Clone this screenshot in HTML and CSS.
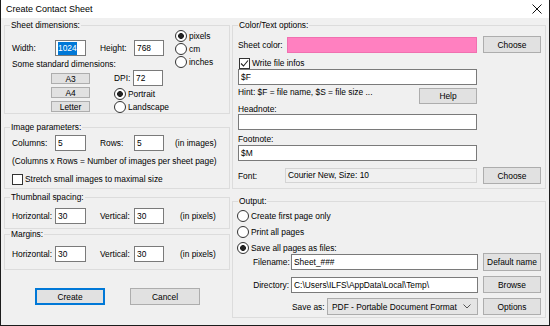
FILE: index.html
```html
<!DOCTYPE html>
<html lang="en">
<head>
    <meta charset="UTF-8">
    <title>Create Contact Sheet</title>
    <link rel="stylesheet" href="styles.css">
</head>
<body>
    <div class="window">
        <div class="titlebar">
            <span class="title">Create Contact Sheet</span>
            <svg class="close" width="10" height="10" viewBox="0 0 10 10"><path d="M0.5 0.5L9.5 9.5M9.5 0.5L0.5 9.5" stroke="#111" stroke-width="1"/></svg>
        </div>
        <div class="dialog">
            <div class="col-left">
                <fieldset class="group sheet">
                    <legend>Sheet dimensions:</legend>
                    <div class="inner">
                        <div class="sheet-top">
                            <div class="sheet-size">
                                <div class="row">
                                    <span class="lbl w43">Width:</span>
                                    <span class="edit w31"><span class="sel">1024</span></span>
                                    <span class="lbl w34 ml14">Height:</span>
                                    <span class="edit w30">768</span>
                                </div>
                                <div class="caption">Some standard dimensions:</div>
                            </div>
                            <div class="units">
                                <div class="radio on"><i></i>pixels</div>
                                <div class="radio"><i></i>cm</div>
                                <div class="radio"><i></i>inches</div>
                            </div>
                        </div>
                        <div class="sheet-bottom">
                            <div class="std-buttons">
                                <span class="btn std">A3</span>
                                <span class="btn std">A4</span>
                                <span class="btn std">Letter</span>
                            </div>
                            <div class="dpi">
                                <div class="row">
                                    <span class="lbl w19">DPI:</span>
                                    <span class="edit w30">72</span>
                                </div>
                                <div class="radio on"><i></i>Portrait</div>
                                <div class="radio"><i></i>Landscape</div>
                            </div>
                        </div>
                    </div>
                </fieldset>

                <fieldset class="group params">
                    <legend>Image parameters:</legend>
                    <div class="inner">
                        <div class="row">
                            <span class="lbl w43">Columns:</span>
                            <span class="edit w31">5</span>
                            <span class="lbl w34 ml14">Rows:</span>
                            <span class="edit w30">5</span>
                            <span class="unit ml11">(in images)</span>
                        </div>
                        <div class="note">(Columns x Rows = Number of images per sheet page)</div>
                        <div class="check"><i></i>Stretch small images to maximal size</div>
                    </div>
                </fieldset>

                <fieldset class="group spacing">
                    <legend>Thumbnail spacing:</legend>
                    <div class="inner">
                        <div class="row">
                            <span class="lbl w43">Horizontal:</span>
                            <span class="edit w31">30</span>
                            <span class="lbl w34 ml14">Vertical:</span>
                            <span class="edit w30">30</span>
                            <span class="unit ml16">(in pixels)</span>
                        </div>
                    </div>
                </fieldset>

                <fieldset class="group margins">
                    <legend>Margins:</legend>
                    <div class="inner">
                        <div class="row">
                            <span class="lbl w43">Horizontal:</span>
                            <span class="edit w31">30</span>
                            <span class="lbl w34 ml14">Vertical:</span>
                            <span class="edit w30">30</span>
                            <span class="unit ml16">(in pixels)</span>
                        </div>
                    </div>
                </fieldset>

                <div class="actions">
                    <span class="btn big default">Create</span>
                    <span class="btn big">Cancel</span>
                </div>
            </div>

            <div class="col-right">
                <fieldset class="group text-opts">
                    <legend>Color/Text options:</legend>
                    <div class="inner">
                        <div class="row r-color">
                            <span class="lbl w49">Sheet color:</span>
                            <span class="swatch"></span>
                            <span class="btn side">Choose</span>
                        </div>
                        <div class="check on"><i><svg width="9" height="9" viewBox="0 0 9 9"><path d="M1 4.5L3.5 7L8 1.5" fill="none" stroke="#222" stroke-width="1.1"/></svg></i>Write file infos</div>
                        <span class="edit wide">$F</span>
                        <div class="hint-row">
                            <span class="hint">Hint: $F = file name, $S = file size ...</span>
                            <span class="btn help">Help</span>
                        </div>
                        <div class="caption">Headnote:</div>
                        <span class="edit wide"></span>
                        <div class="caption foot">Footnote:</div>
                        <span class="edit wide foot-edit">$M</span>
                        <div class="row r-font">
                            <span class="lbl w47">Font:</span>
                            <span class="static">Courier New, Size: 10</span>
                            <span class="btn side">Choose</span>
                        </div>
                    </div>
                </fieldset>

                <fieldset class="group output">
                    <legend>Output:</legend>
                    <div class="inner">
                        <div class="out-radios">
                            <div class="radio"><i></i>Create first page only</div>
                            <div class="radio"><i></i>Print all pages</div>
                            <div class="radio on"><i></i>Save all pages as files:</div>
                        </div>
                        <div class="row r-file">
                            <span class="lbl rlbl">Filename:</span>
                            <span class="edit path">Sheet_###</span>
                            <span class="btn side tall">Default name</span>
                        </div>
                        <div class="row r-dir">
                            <span class="lbl rlbl">Directory:</span>
                            <span class="edit path">C:\Users\ILFS\AppData\Local\Temp\</span>
                            <span class="btn side">Browse</span>
                        </div>
                        <div class="row r-save">
                            <span class="lbl w35">Save as:</span>
                            <span class="combo">PDF - Portable Document Format<svg width="8" height="5" viewBox="0 0 8 5"><path d="M0.5 0.5L4 4L7.5 0.5" fill="none" stroke="#555" stroke-width="1"/></svg></span>
                            <span class="btn side">Options</span>
                        </div>
                    </div>
                </fieldset>
            </div>
        </div>
    </div>
</body>
</html>
```

FILE: styles.css
```css
* {
    box-sizing: border-box;
}
body {
    margin: 0;
    font-family: "Liberation Sans", Arial, sans-serif;
    font-size: 8.4px;
    color: #000;
    background: #f0f0f0;
}
.window {
    width: 550px;
    height: 326px;
    border: 1px solid #1c1c1c;
    border-top: 0;
    background: #f0f0f0;
}
.titlebar {
    height: 18px;
    background: #fff;
    display: flex;
    align-items: center;
    justify-content: space-between;
    padding: 0 7px 0 5px;
}
.title {
    font-size: 9px;
}
.dialog {
    display: flex;
    gap: 2px;
    padding: 2px 2px 0 3px;
}
.col-left {
    width: 226px;
}
.col-right {
    width: 314px;
}

/* group boxes */
.group {
    margin: 0;
    padding: 0;
    min-width: 0;
    border: 1px solid #dcdcdc;
}
.group legend {
    margin-left: 5px;
    padding: 0 1px;
    line-height: 10px;
    height: 10px;
}
.group .inner {
    padding-left: 7px;
}

/* controls */
.row {
    display: flex;
    align-items: center;
    height: 16px;
}
.lbl {
    flex: none;
    white-space: nowrap;
}
.w19 { width: 19px; }
.w34 { width: 34px; }
.w35 { width: 35px; }
.w43 { width: 43px; }
.w47 { width: 47px; }
.w49 { width: 49px; }
.ml11 { margin-left: 11px; }
.ml14 { margin-left: 14px; }
.ml16 { margin-left: 16px; }

.edit {
    display: block;
    flex: none;
    height: 16px;
    line-height: 14px;
    padding-left: 2px;
    background: #fff;
    border: 1px solid #7a7a7a;
    white-space: nowrap;
    overflow: hidden;
}
.edit.w30 { width: 30px; }
.edit.w31 { width: 31px; }
.sel {
    background: #0078d7;
    color: #fff;
    padding: 1px 0 2px;
}
.btn {
    display: flex;
    align-items: center;
    justify-content: center;
    flex: none;
    background: #e1e1e1;
    border: 1px solid #adadad;
    white-space: nowrap;
}
.btn.default {
    border-color: #0078d7;
    box-shadow: inset 0 0 0 1px #0078d7;
}
.radio {
    display: flex;
    align-items: center;
    height: 13px;
    white-space: nowrap;
}
.radio i,
.check i {
    flex: none;
    width: 12px;
    height: 12px;
    margin-right: 2px;
    background: #fff;
    border: 1px solid #333;
}
.radio i {
    border-radius: 50%;
}
.radio.on i {
    background: radial-gradient(circle, #222 0 2.6px, #fff 3.2px);
}
.check {
    display: flex;
    align-items: center;
    height: 12px;
}
.check i {
    width: 11px;
    height: 11px;
    display: flex;
    align-items: center;
    justify-content: center;
}
.caption {
    line-height: 10px;
    height: 10px;
}

/* sheet dimensions */
.sheet-top {
    display: flex;
    height: 39px;
}
.sheet-size {
    width: 163px;
    padding-top: 10px;
}
.sheet-size .caption {
    margin-top: 3px;
}
.units {
    margin-top: -1px;
}
.sheet-bottom {
    display: flex;
}
.std-buttons {
    display: flex;
    flex-direction: column;
    gap: 3px;
    margin-left: 39px;
    padding-top: 4px;
}
.btn.std {
    width: 39px;
    height: 11px;
}
.dpi {
    margin-left: 24px;
    padding-top: 1px;
}
.dpi .row {
    margin-bottom: 1px;
}

/* image parameters */
.params {
    margin-top: 8px;
}
.params .row {
    margin-top: 3px;
}
.note {
    margin-top: 5px;
    line-height: 10px;
}
.params .check {
    margin-top: 7px;
    margin-bottom: 3px;
}
.spacing {
    margin-top: 3px;
}
.spacing .row {
    margin-top: 6px;
    margin-bottom: 4px;
}
.margins .row {
    margin-top: 7px;
    margin-bottom: 7px;
}
.actions {
    display: flex;
    gap: 25px;
    margin-top: 18px;
    padding-left: 31px;
}
.btn.big {
    width: 70px;
    height: 17px;
}

/* color / text options */
.text-opts .inner {
    padding-left: 5px;
    padding-bottom: 4px;
}
.r-color {
    margin-top: 6px;
    height: 17px;
}
.swatch {
    width: 190px;
    height: 16px;
    background: #ff80c0;
    border: 1px solid #f070b0;
}
.btn.side {
    width: 58px;
    height: 17px;
    margin-left: 6px;
}
.text-opts .check {
    margin-top: 4px;
    margin-left: 1px;
}
.edit.wide {
    width: 239px;
}
.hint-row {
    display: flex;
    justify-content: space-between;
    width: 239px;
    margin-top: 3px;
}
.hint {
    line-height: 9px;
}
.btn.help {
    width: 58px;
    height: 16px;
}
.caption.foot {
    margin-top: 4px;
}
.foot-edit {
    margin-top: 1px;
}
.r-font {
    margin-top: 6px;
    height: 17px;
}
.static {
    width: 192px;
    height: 15px;
    line-height: 13px;
    padding-left: 2px;
    background: #f0f0f0;
    border: 1px solid #d4d4d4;
}

/* output */
.output {
    margin-top: 7px;
}
.output .inner {
    padding-left: 4px;
    padding-bottom: 2px;
}
.out-radios {
    display: flex;
    flex-direction: column;
    gap: 2px;
    margin-top: 3px;
}
.out-radios .radio {
    height: 14px;
}
.r-file {
    margin-top: -2px;
    height: 18px;
    padding-left: 16px;
}
.r-dir,
.r-save {
    margin-top: 5px;
    height: 17px;
}
.r-dir {
    padding-left: 16px;
}
.r-save {
    padding-left: 55px;
}
.rlbl {
    width: 36px;
    margin-right: 2px;
    text-align: right;
}
.edit.path {
    width: 187px;
}
.btn.tall {
    height: 18px;
    margin-left: 5px;
}
.r-dir .btn.side,
.r-save .btn.side {
    margin-left: 5px;
}
.combo {
    display: flex;
    align-items: center;
    justify-content: space-between;
    width: 151px;
    height: 17px;
    padding: 0 6px 0 4px;
    background: #e5e5e5;
    border: 1px solid #acacac;
}
```
